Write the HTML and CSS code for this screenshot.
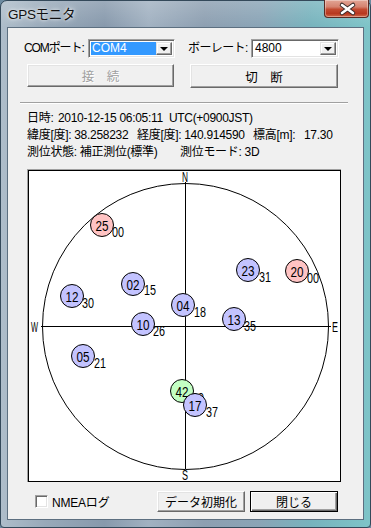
FILE: index.html
```html
<!DOCTYPE html>
<html lang="ja">
<head>
<meta charset="utf-8">
<title>GPSモニタ</title>
<link rel="stylesheet" href="styles.css">
</head>
<body>
<div class="window">
  <div class="titlebar">
    <span class="title">GPSモニタ</span>
    <div class="close">
      <svg width="45" height="18" viewBox="0 0 45 18">
        <path d="M17 5 L28 13 M28 5 L17 13" stroke="#3a2a28" stroke-width="4.5" stroke-linecap="round"/>
        <path d="M17 5 L28 13 M28 5 L17 13" stroke="#fff" stroke-width="2.6" stroke-linecap="round"/>
      </svg>
    </div>
  </div>
  <div class="client">
    <div class="row1">
      <span class="lbl lbl-com">COMポート:</span>
      <div class="combo combo-com">
        <div class="combo-text"><span class="sel">COM4</span></div>
        <div class="drop"><span class="tri"></span></div>
      </div>
      <span class="lbl lbl-baud">ボーレート:</span>
      <div class="combo combo-baud">
        <div class="combo-text"><span class="val">4800</span></div>
        <div class="drop"><span class="tri"></span></div>
      </div>
    </div>
    <div class="row2">
      <div class="btn btn-connect disabled">接　続</div>
      <div class="btn btn-disconnect">切　断</div>
    </div>
    <div class="sep"></div>
    <div class="info">
      <div class="line"><span class="c1a">日時:</span><span>2010-12-15 06:05:11&nbsp; UTC(+0900JST)</span></div>
      <div class="line"><span class="c2a">緯度[度]: 38.258232</span><span class="c2b">経度[度]: 140.914590</span><span class="c2c">標高[m]:</span><span>17.30</span></div>
      <div class="line"><span class="c3a">測位状態: 補正測位(標準)</span><span>測位モード: 3D</span></div>
    </div>
    <div class="plot">
      <svg width="313" height="312" viewBox="0 0 313 312" class="sky">
        <rect x="0.5" y="0.5" width="312" height="311" fill="#fff" stroke="#000"/>
        <circle cx="157.5" cy="156.5" r="143" fill="none" stroke="#000"/>
        <line x1="157.5" y1="12" x2="157.5" y2="299" stroke="#000"/>
        <line x1="13" y1="156.5" x2="303" y2="156.5" stroke="#000"/>
        <g class="dir">
          <text x="154" y="12" textLength="6" lengthAdjust="spacingAndGlyphs">N</text>
          <text x="154" y="310" textLength="6" lengthAdjust="spacingAndGlyphs">S</text>
          <text x="304" y="162" textLength="6" lengthAdjust="spacingAndGlyphs">E</text>
          <text x="3" y="162" textLength="7" lengthAdjust="spacingAndGlyphs">W</text>
        </g>
        <g class="sat">
          <circle cx="74" cy="55" r="11.5" class="pink"/>
          <text x="74" y="60.5" class="num" textLength="13" lengthAdjust="spacingAndGlyphs">25</text>
          <text x="84" y="67" textLength="12" lengthAdjust="spacingAndGlyphs">00</text>

          <circle cx="105" cy="114" r="11.5" class="blue"/>
          <text x="105" y="119.5" class="num" textLength="13" lengthAdjust="spacingAndGlyphs">02</text>
          <text x="116" y="125" textLength="12" lengthAdjust="spacingAndGlyphs">15</text>

          <circle cx="44" cy="126" r="11.5" class="blue"/>
          <text x="44" y="131.5" class="num" textLength="13" lengthAdjust="spacingAndGlyphs">12</text>
          <text x="54" y="138" textLength="12" lengthAdjust="spacingAndGlyphs">30</text>

          <circle cx="155" cy="135" r="11.5" class="blue"/>
          <text x="155" y="140.5" class="num" textLength="13" lengthAdjust="spacingAndGlyphs">04</text>
          <text x="166" y="147" textLength="12" lengthAdjust="spacingAndGlyphs">18</text>

          <circle cx="115" cy="154" r="11.5" class="blue"/>
          <text x="115" y="159.5" class="num" textLength="13" lengthAdjust="spacingAndGlyphs">10</text>
          <text x="125" y="166" textLength="12" lengthAdjust="spacingAndGlyphs">26</text>

          <circle cx="220" cy="100" r="11.5" class="blue"/>
          <text x="220" y="105.5" class="num" textLength="13" lengthAdjust="spacingAndGlyphs">23</text>
          <text x="231" y="112" textLength="12" lengthAdjust="spacingAndGlyphs">31</text>

          <circle cx="269" cy="101" r="11.5" class="pink"/>
          <text x="269" y="106.5" class="num" textLength="13" lengthAdjust="spacingAndGlyphs">20</text>
          <text x="279" y="113" textLength="12" lengthAdjust="spacingAndGlyphs">00</text>

          <circle cx="206" cy="149" r="11.5" class="blue"/>
          <text x="206" y="154.5" class="num" textLength="13" lengthAdjust="spacingAndGlyphs">13</text>
          <text x="216" y="161" textLength="12" lengthAdjust="spacingAndGlyphs">35</text>

          <circle cx="55" cy="186" r="11.5" class="blue"/>
          <text x="55" y="191.5" class="num" textLength="13" lengthAdjust="spacingAndGlyphs">05</text>
          <text x="66" y="198" textLength="12" lengthAdjust="spacingAndGlyphs">21</text>

          <circle cx="154" cy="221" r="11.5" class="green"/>
          <text x="154" y="226.5" class="num" textLength="13" lengthAdjust="spacingAndGlyphs">42</text>
          <text x="164" y="233" textLength="12" lengthAdjust="spacingAndGlyphs">09</text>

          <circle cx="167" cy="235" r="11.5" class="blue"/>
          <text x="167" y="240.5" class="num" textLength="13" lengthAdjust="spacingAndGlyphs">17</text>
          <text x="178" y="247" textLength="12" lengthAdjust="spacingAndGlyphs">37</text>
        </g>
      </svg>
    </div>
    <div class="row3">
      <span class="chk"></span>
      <span class="chk-lbl">NMEAログ</span>
      <div class="btn btn-init">データ初期化</div>
      <div class="btn btn-close">閉じる</div>
    </div>
  </div>
</div>
</body>
</html>
```
FILE: styles.css
```css
html, body {
  margin: 0;
  padding: 0;
}
body {
  width: 371px;
  height: 528px;
  overflow: hidden;
  background: #6c8aa0;
  font-family: "Liberation Sans", "Noto Sans CJK JP", sans-serif;
  font-size: 12px;
  color: #000;
}
.window {
  width: 371px;
  height: 528px;
  box-sizing: border-box;
  border: 1px solid #34495a;
  border-radius: 7px 7px 4px 4px;
  padding: 0 6px 7px 6px;
  display: flex;
  flex-direction: column;
  background:
    linear-gradient(to bottom, rgba(255,255,255,0.18) 0px, rgba(255,255,255,0) 26px),
    linear-gradient(to right, #aebdca 0%, #98a9b9 12%, #8799ac 28%, #a1b1c1 40%, #8d9fb1 55%, #8aa4b6 70%, #77b3bd 84%, #7ec4c8 100%);
}
.titlebar {
  height: 26px;
  display: flex;
  align-items: flex-start;
  position: relative;
}
.title {
  margin: 6px 0 0 1px;
  font-size: 13.5px;
  line-height: 15px;
  letter-spacing: -0.3px;
  color: #111;
  text-shadow: 0 0 6px rgba(255,255,255,0.9), 0 0 3px rgba(255,255,255,0.8);
}
.close {
  position: absolute;
  right: -5px;
  top: -1px;
  width: 45px;
  height: 18px;
  box-sizing: border-box;
  border: 1px solid #5a2a22;
  border-top: none;
  border-radius: 0 0 4px 4px;
  background: linear-gradient(to bottom, #e2a595 0%, #d58370 40%, #c24a30 55%, #b8381f 80%, #d06a4a 100%);
  box-shadow: inset 0 0 0 1px rgba(255,255,255,0.35);
}
.close svg {
  display: block;
}
.client {
  flex: 1;
  border: 1px solid #5c6f80;
  background: #f0f0f0;
  padding: 11px 0 0 16px;
  display: flex;
  flex-direction: column;
}
.row1 {
  display: flex;
  align-items: center;
  height: 19px;
}
.lbl {
  line-height: 19px;
  white-space: nowrap;
  letter-spacing: -0.6px;
  flex: none;
}
.lbl-com { width: 64px; letter-spacing: -1.1px; }
.lbl-baud { width: 63px; margin-left: 13px; }
.combo {
  flex: none;
  height: 19px;
  box-sizing: border-box;
  border: 1px solid;
  border-color: #a0a0a0 #fff #fff #a0a0a0;
  box-shadow: inset 1px 1px #696969, inset -1px -1px #e3e3e3;
  background: #fff;
  display: flex;
  padding: 2px;
}
.combo-com { width: 87px; }
.combo-baud { width: 88px; }
.combo-text {
  flex: 1;
  display: flex;
  align-items: center;
  line-height: 13px;
}
.sel {
  background: #3399ff;
  color: #fff;
  flex: 1;
  padding-left: 1px;
  height: 13px;
}
.val {
  padding-left: 1px;
}
.drop {
  width: 16px;
  height: 13px;
  box-sizing: border-box;
  border: 1px solid;
  border-color: #e3e3e3 #696969 #696969 #e3e3e3;
  box-shadow: inset -1px -1px #a0a0a0, inset 1px 1px #fff;
  background: #f0f0f0;
  display: flex;
  align-items: center;
  justify-content: center;
}
.tri {
  width: 0;
  height: 0;
  border-left: 4px solid transparent;
  border-right: 4px solid transparent;
  border-top: 4px solid #000;
  margin-top: 1px;
}
.row2 {
  display: flex;
  margin-top: 6px;
  margin-left: 3px;
}
.btn {
  box-sizing: border-box;
  border: 1px solid;
  border-color: #fff #696969 #696969 #fff;
  box-shadow: inset -1px -1px #a0a0a0, inset 1px 1px #e3e3e3;
  background: #f0f0f0;
  display: flex;
  align-items: center;
  justify-content: center;
  white-space: nowrap;
}
.btn-connect { width: 147px; height: 23px; font-size: 12.5px; }
.btn-disconnect { width: 148px; height: 24px; margin-left: 16px; font-size: 12.5px; }
.disabled {
  color: #a0a0a0;
  text-shadow: 1px 1px 0 #fff;
}
.sep {
  margin: 14px 0 0 -4px;
  width: 328px;
  height: 0;
  border-top: 1px solid #a0a0a0;
  border-bottom: 1px solid #fff;
}
.info {
  margin: 6px 0 0 3px;
  font-size: 12px;
  letter-spacing: -0.3px;
}
.line {
  height: 17px;
  line-height: 17px;
  display: flex;
  white-space: nowrap;
}
.c1a { width: 31px; }
.c2a { width: 110px; }
.c2b { width: 116px; }
.c2c { width: 51px; }
.c3a { width: 153px; }
.plot {
  margin: 8px 0 0 3px;
  width: 313px;
  height: 312px;
  border-left: 1px solid #a0a0a0;
  border-top: 1px solid #a0a0a0;
}
.sky {
  display: block;
}
.sky text {
  font-family: "Liberation Sans", sans-serif;
  font-size: 14px;
  fill: #000;
}
.sky .num {
  text-anchor: middle;
  font-size: 15px;
}
.blue { fill: #c3c3ff; stroke: #000; stroke-width: 1; }
.pink { fill: #ffc3c3; stroke: #000; stroke-width: 1; }
.green { fill: #c3ffc3; stroke: #000; stroke-width: 1; }
.row3 {
  display: flex;
  align-items: center;
  margin-top: 9px;
  height: 21px;
}
.chk {
  width: 13px;
  height: 13px;
  box-sizing: border-box;
  margin-left: 11px;
  border: 1px solid;
  border-color: #a0a0a0 #fff #fff #a0a0a0;
  box-shadow: inset 1px 1px #696969, inset -1px -1px #e3e3e3;
  background: #fff;
}
.chk-lbl {
  margin-left: 4px;
  width: 105px;
  letter-spacing: -0.2px;
}
.btn-init { width: 88px; height: 21px; margin-left: 0; }
.btn-close {
  width: 88px;
  height: 21px;
  margin-left: 5px;
  border: 1px solid #000;
  box-shadow: inset 1px 1px #fff, inset -1px -1px #696969, inset -2px -2px #a0a0a0;
}
```
